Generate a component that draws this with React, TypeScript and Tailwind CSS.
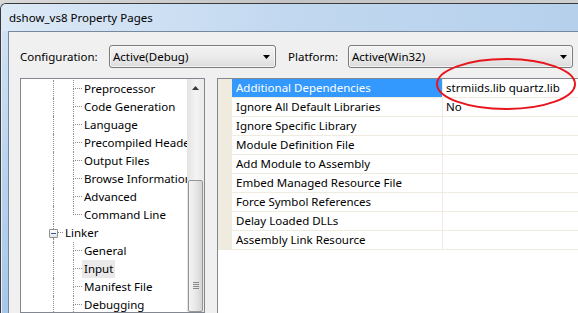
import React from "react";

const dot = "border-dotted border-[#8c8c8c]";

function ChildRow({ label, last, selected, first }: { label: string; last?: boolean; selected?: boolean; first?: boolean }) {
  return (
    <div className="flex h-[18px] shrink-0">
      <div className="w-[32px] shrink-0" />
      <div className={`w-[20px] shrink-0 border-l ${dot}`} />
      <div className="w-[9px] shrink-0 flex flex-col">
        <div className={`h-[9px] border-b ${first ? "" : "border-l"} ${dot}`} />
        <div className={`flex-1 ${last ? "" : `border-l ${dot}`}`} />
      </div>
      <div className="flex items-center">
        <span className={`px-[2px] leading-[18px] whitespace-nowrap ${selected ? "bg-[#e9e9e9]" : ""}`}>{label}</span>
      </div>
    </div>
  );
}

function ParentRow({ label }: { label: string }) {
  return (
    <div className="flex h-[18px] shrink-0">
      <div className="w-[28px] shrink-0" />
      <div className="w-[9px] shrink-0 flex flex-col items-center">
        <div className={`flex-1 w-0 border-l ${dot}`} />
        <div className="w-[9px] h-[9px] border border-[#8f8f8f] rounded-[1px] bg-gradient-to-b from-white to-[#e4e4e4] flex items-center justify-center">
          <div className="w-[5px] h-[1px] bg-[#2b5ca8]" />
        </div>
        <div className={`flex-1 w-0 border-l ${dot}`} />
      </div>
      <div className="w-[5px] shrink-0 flex flex-col">
        <div className={`h-[9px] border-b ${dot}`} />
      </div>
      <div className="flex items-center">
        <span className="px-[2px] leading-[18px] whitespace-nowrap">{label}</span>
      </div>
    </div>
  );
}

function Combo({ text, w }: { text: string; w: string }) {
  return (
    <div className={`${w} h-[23px] rounded-[3px] border border-[#7a7a7a] bg-gradient-to-b from-[#f3f3f3] via-[#ebebeb] to-[#dcdcdc] flex items-center pl-[3px] pr-[5px] shadow-[inset_0_0_0_1px_rgba(255,255,255,0.7)]`}>
      <span className="flex-1 whitespace-nowrap">{text}</span>
      <svg width="7" height="4" viewBox="0 0 7 4">
        <polygon points="0,0 7,0 3.5,4" fill="#000" />
      </svg>
    </div>
  );
}

const props: [string, string][] = [
  ["Additional Dependencies", "strmiids.lib quartz.lib"],
  ["Ignore All Default Libraries", "No"],
  ["Ignore Specific Library", ""],
  ["Module Definition File", ""],
  ["Add Module to Assembly", ""],
  ["Embed Managed Resource File", ""],
  ["Force Symbol References", ""],
  ["Delay Loaded DLLs", ""],
  ["Assembly Link Resource", ""],
];

export default function App() {
  const cc = ["Preprocessor", "Code Generation", "Language", "Precompiled Headers", "Output Files", "Browse Information", "Advanced", "Command Line"];
  return (
    <div className="relative w-[578px] h-[313px] overflow-hidden bg-[#d6d6d6] flex flex-col font-['Noto_Sans',sans-serif] text-[11.5px] text-black">
      <div className="h-[3px] shrink-0 bg-gradient-to-r from-[#d8d8d8] via-[#c4c4c4] to-[#cfcfcf]" />
      <div className="flex-1 min-h-0 flex flex-col border-l border-t border-[#3a3a3a] rounded-tl-[6px] overflow-hidden bg-[#c3d9f0]">
        <div className="h-[27px] shrink-0 flex items-center pl-[8px] bg-gradient-to-r from-[#dce9f6] via-[#c2d8f0] to-[#b6d0ec] text-[11.5px]">
          dshow_vs8 Property Pages
        </div>
        <div className="flex-1 min-h-0 flex">
          <div className="w-[7px] shrink-0 bg-gradient-to-b from-[#cfe1f4] via-[#b9d3ee] to-[#a6c7ea] border-l border-[#e6f0fa]" />
          <div className="flex-1 min-w-0 flex flex-col border-l border-t border-[#75889e] bg-[#f0f0f0] pl-[11px] pt-[13px]">
            <div className="h-[23px] shrink-0 flex items-center">
              <div className="w-[89px] shrink-0">Configuration:</div>
              <Combo text="Active(Debug)" w="w-[167px]" />
              <div className="w-[60px] shrink-0 ml-[12px]">Platform:</div>
              <Combo text="Active(Win32)" w="w-[225px]" />
            </div>
            <div className="flex-1 min-h-0 flex mt-[10px]">
              <div className="w-[185px] shrink-0 border border-[#828790] bg-white flex">
                <div className="flex-1 min-w-0 overflow-hidden flex flex-col pt-[1px]">
                  {cc.map((c, i) => (
                    <ChildRow key={c} label={c} first={false} last={i === cc.length - 1} />
                  ))}
                  <ParentRow label="Linker" />
                  <ChildRow label="General" />
                  <ChildRow label="Input" selected />
                  <ChildRow label="Manifest File" />
                  <ChildRow label="Debugging" />
                  <ChildRow label="System" />
                </div>
                <div className="w-[17px] shrink-0 flex flex-col bg-gradient-to-r from-[#e3e3e3] via-[#f3f3f3] to-[#eaeaea]">
                  <div className="h-[17px] shrink-0 flex items-center justify-center">
                    <svg width="7" height="4" viewBox="0 0 7 4">
                      <polygon points="3.5,0 7,4 0,4" fill="#3a3a3a" />
                    </svg>
                  </div>
                  <div className="h-[84px] shrink-0" />
                  <div className="flex-1 mx-[1px] rounded-[2px] border border-[#979797] bg-gradient-to-r from-[#f4f4f4] via-[#e8e8e8] to-[#d4d4d4] flex flex-col items-center pt-[101px]">
                    <div className="flex flex-col gap-[1px]">
                      <div className="w-[6px] h-[1px] bg-[#8a8a8a]" />
                      <div className="w-[6px] h-[1px] bg-[#8a8a8a]" />
                      <div className="w-[6px] h-[1px] bg-[#8a8a8a]" />
                      <div className="w-[6px] h-[1px] bg-[#8a8a8a]" />
                    </div>
                  </div>
                </div>
              </div>
              <div className="flex-1 min-w-0 ml-[12px] border-l border-t border-[#828790] bg-white flex flex-col">
                {props.map(([n, v], i) => (
                  <div key={n} className="flex h-[19px] shrink-0">
                    <div className="w-[14px] shrink-0 bg-[#efebdf]" />
                    <div className={`w-[210px] shrink-0 border-b border-[#efebdf] flex items-center pl-[4px] whitespace-nowrap ${i === 0 ? "bg-[#3399ff] text-white border-[#3399ff]" : ""}`}>
                      {n}
                    </div>
                    <div className="flex-1 border-l border-b border-[#efebdf] flex items-center pl-[3px] whitespace-nowrap">{v}</div>
                  </div>
                ))}
              </div>
            </div>
          </div>
        </div>
      </div>
      <svg className="absolute left-0 top-0 pointer-events-none" width="578" height="313">
        <ellipse cx="506" cy="84" rx="69" ry="25" fill="none" stroke="#e8161c" strokeWidth="2" />
      </svg>
    </div>
  );
}
